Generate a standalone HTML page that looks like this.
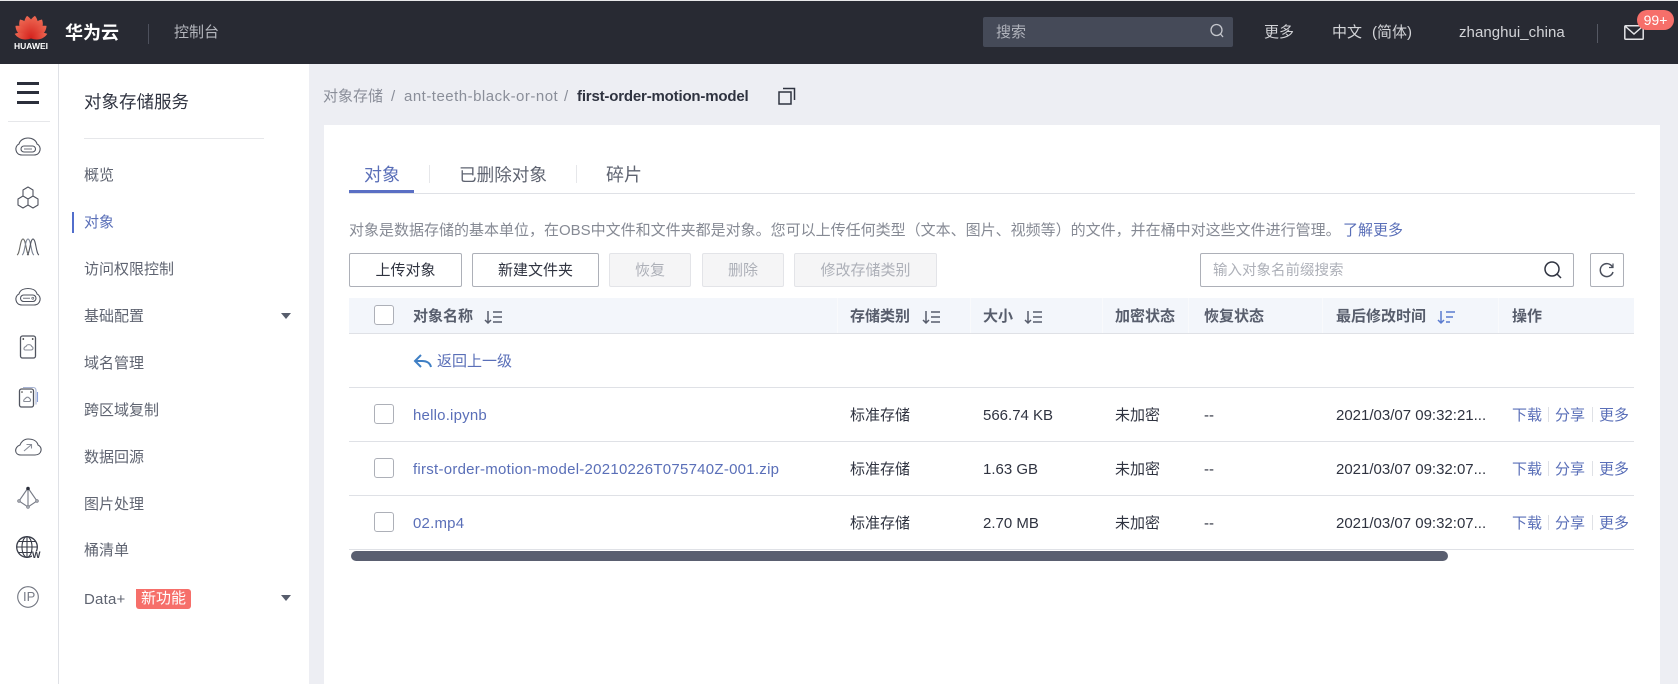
<!DOCTYPE html>
<html lang="zh"><head><meta charset="utf-8"><title>对象存储服务</title>
<style>
*{box-sizing:border-box}
html,body{margin:0;padding:0;width:1678px;height:684px;overflow:hidden;background:#edeef3;font-family:"Liberation Sans","Noto Sans CJK SC",sans-serif;font-size:15px;color:#2f3340}
.a{position:absolute}
.t{position:absolute;white-space:nowrap;line-height:20px;height:20px}
.m{color:#5f6471}
.l{color:#5a6fb8}
.h{font-weight:700;color:#575d6c}
.btn{position:absolute;top:253px;height:34px;line-height:34px;text-align:center;border:1px solid #adb0b8;border-radius:2px;background:#fff;color:#2f3340;font-size:15px}
.dis{background:#f5f5f6;border-color:#e3e4e8;color:#adb0b8}
.cb{position:absolute;left:374px;width:20px;height:20px;border:1px solid #adb0b8;border-radius:3px;background:#fff}
.ln{position:absolute;left:349px;width:1285px;height:1px;background:#dfe1e6}
.d{position:absolute;width:1px;height:15px;background:#dfe1e6}
svg{position:absolute;overflow:visible}
</style></head><body>

<!-- header -->
<div class="a" style="left:0;top:0;width:1678px;height:1px;background:#e8e8ea"></div>
<div class="a" style="left:0;top:1px;width:1678px;height:63px;background:#282a33"></div>
<svg style="left:0;top:0" width="62" height="50" viewBox="0 0 62 50">
<defs><linearGradient id="r" x1="0" y1="0" x2="0" y2="1"><stop offset="0" stop-color="#ee6a54"/><stop offset="1" stop-color="#d4211c"/></linearGradient></defs>
<g fill="url(#r)">
<path d="M0 0C-6.500-8-6-18 0-23C6-18 6.500-8 0 0Z" transform="translate(31 38.500) rotate(-10)"/>
<path d="M0 0C-6.500-8-6-18 0-23C6-18 6.500-8 0 0Z" transform="translate(31 38.500) rotate(10)"/>
<path d="M0 0C-6.500-8-6-17 0-22C6-17 6.500-8 0 0Z" transform="translate(31 38.500) rotate(-30)"/>
<path d="M0 0C-6.500-8-6-17 0-22C6-17 6.500-8 0 0Z" transform="translate(31 38.500) rotate(30)"/>
<path d="M0 0C-5.500-7-5.500-15 0-20C5.500-15 5.500-7 0 0Z" transform="translate(31 38.500) rotate(-51)"/>
<path d="M0 0C-5.500-7-5.500-15 0-20C5.500-15 5.500-7 0 0Z" transform="translate(31 38.500) rotate(51)"/>
<path d="M0 0C-4-6-4-12 0-17C4-12 4-6 0 0Z" transform="translate(31 38.500) rotate(-74)"/>
<path d="M0 0C-4-6-4-12 0-17C4-12 4-6 0 0Z" transform="translate(31 38.500) rotate(74)"/>
</g></svg>
<div class="t" style="left:13px;top:36px;width:36px;text-align:center;font-size:8.500px;font-weight:700;color:#fff">HUAWEI</div>
<div class="t" style="left:65px;top:22px;font-size:18px;font-weight:700;color:#fff;margin-top:1px">华为云</div>
<div class="a" style="left:148px;top:24px;width:1px;height:20px;background:#4d505c"></div>
<div class="t" style="left:174px;top:23px;color:#b4b6bd">控制台</div>
<div class="a" style="left:983px;top:17px;width:250px;height:30px;background:#454a58;border-radius:2px"></div>
<div class="t" style="left:996px;top:23px;color:#b0b3bb">搜索</div>
<svg style="left:1209px;top:23px" width="16" height="16" viewBox="0 0 16 16" fill="none" stroke="#c4c6cc" stroke-width="1.300"><circle cx="7.500" cy="7" r="5.500"/><path d="M11.500 11l2.500 3"/></svg>
<div class="t" style="left:1264px;top:23px;color:#d3d4d8">更多</div>
<div class="t" style="left:1332px;top:23px;color:#d3d4d8">中文</div>
<div class="t" style="left:1372px;top:23px;color:#d3d4d8">(简体)</div>
<div class="t" style="left:1459px;top:23px;color:#d3d4d8;letter-spacing:.05px">zhanghui_china</div>
<div class="a" style="left:1597px;top:24px;width:1px;height:19px;background:#555863"></div>
<svg style="left:1624px;top:25px" width="20" height="15" viewBox="0 0 20 15" fill="none" stroke="#e3e4e7" stroke-width="1.500"><rect x=".8" y=".8" width="18.400" height="13.400" rx="1"/><path d="M1.500 1.500L10 9l8.500-7.500"/></svg>
<div class="t" style="left:1637px;top:10px;width:37px;height:20px;background:#f66f6a;border-radius:10px;color:#fff;text-align:center;font-size:14px">99+</div>

<!-- rail + sidebar -->
<div class="a" style="left:0;top:64px;width:309px;height:620px;background:#fff"></div>
<div class="a" style="left:58px;top:64px;width:1px;height:620px;background:#dfe1e6"></div>
<div class="a" style="left:17px;top:82px;width:22px;height:2.500px;background:#2b2f3b"></div>
<div class="a" style="left:17px;top:91px;width:22px;height:2.500px;background:#2b2f3b"></div>
<div class="a" style="left:17px;top:101px;width:22px;height:2.500px;background:#2b2f3b"></div>
<div class="a" style="left:8px;top:121px;width:42px;height:1px;background:#e6e7ea"></div>

<svg style="left:0;top:0" width="58" height="684" viewBox="0 0 58 684" fill="none" stroke="#50545f" stroke-width="1.100">
<!-- cloud / pill -->
<path d="M22 155h12c7 0 8-9 3-11-1-4-5-6-9-6s-8 2-9 6c-5 2-4 11 3 11z"/>
<rect x="21" y="146" width="14.500" height="6" rx="3"/>
<path d="M24 149h8" stroke-width=".8"/>
<!-- hexes -->
<path d="M28 187l5 3v6l-5 3-5-3v-6zM23 196l5 3v6l-5 3-5-3v-6zM33 196l5 3v6l-5 3-5-3v-6z" stroke-linejoin="round"/>
<!-- waves -->
<path d="M17 255c3-1 3-16 6-16s3 15 6 16" stroke="#6a6a66"/>
<path d="M22 255c3-1 3-16 6-16s3 15 6 16" stroke="#7f8796"/>
<path d="M27 255c3-1 3-16 6-16s3 15 6 16" stroke="#50545f"/>
<!-- cloud 2 -->
<path d="M22 305h12c7 0 8-9 3-11-1-4-5-5.500-9-5.500s-8 1.500-9 5.500c-5 2-4 11 3 11z"/>
<rect x="20.500" y="295" width="15.500" height="6.500" rx="3.200"/>
<path d="M23 298.200h7" stroke-width=".8"/><circle cx="32.800" cy="298.200" r="1" stroke-width=".7"/>
<!-- card -->
<rect x="20.500" y="336" width="15" height="22" rx="2" stroke-width="1.300"/>
<circle cx="23.300" cy="339" r=".9" fill="#333" stroke="none"/><circle cx="32.700" cy="339" r=".9" fill="#333" stroke="none"/>
<path d="M25 350h6c2.500 0 2.500-3 .7-3.500-.7-2.500-5-2.500-5.700 0-2.500.5-2.500 3.500-1 3.500z" stroke="#8a8e99"/>
<!-- card 2 -->
<rect x="19.500" y="389" width="14" height="18" rx="2" stroke-width="1.300"/>
<circle cx="22" cy="392" r=".8" fill="#333" stroke="none"/><circle cx="31" cy="392" r=".8" fill="#333" stroke="none"/>
<path d="M23 387.500h10c2 0 3 1 3 3v14" stroke="#a8b4d4"/><path d="M37.500 392v10" stroke="#8aa0d8"/>
<path d="M24 401.500h5c2 0 2-2.500.5-3-.7-1.800-3.300-1.800-4 0-2 .5-2 3-1.500 3z" stroke="#8a8e99"/>
<!-- cloud arrow -->
<path d="M21 455h14c7 0 8-8 3-10-1-4-5-6-10-6-4 0-7 3-8 6-6 2-6 10 1 10z"/>
<path d="M24 451l7-6M26.500 444.500h5v4" stroke="#8a8e99"/>
<!-- tetra -->
<path d="M28 488l-9 13 9 6 9-6zM28 488v19" stroke="#777b86"/>
<circle cx="28" cy="488.500" r="1.800" fill="#2b2f3b" stroke="none"/>
<circle cx="19" cy="501" r="1.200" fill="#fff" stroke="#777b86"/><circle cx="37" cy="501" r="1.200" fill="#fff" stroke="#777b86"/><circle cx="28" cy="507" r="1.200" fill="#fff" stroke="#777b86"/>
<!-- globe -->
<circle cx="27" cy="547" r="10.300" stroke-width="1.300" stroke="#383c48"/>
<ellipse cx="27" cy="547" rx="5" ry="10.300" stroke="#383c48"/>
<path d="M16.700 547h20.600M18.300 541.500h17.400M18.300 552.500h17.400M27 536.700v20.600" stroke="#383c48"/>
<rect x="32" y="551" width="10" height="8" fill="#fff" stroke="none"/>
<!-- ip -->
<circle cx="28" cy="597" r="10.300" stroke="#70747f"/>
</svg>
<div class="t" style="left:32px;top:549px;font-size:9px;font-weight:700;line-height:12px;height:12px;color:#383c48">W</div>
<div class="t" style="left:23px;top:587px;font-size:13px;color:#777b86">IP</div>

<div class="t" style="left:84px;top:92px;font-size:17.500px;color:#2f3340">对象存储服务</div>
<div class="a" style="left:84px;top:138px;width:180px;height:1px;background:#e6e7ea"></div>
<div class="t m" style="left:84px;top:166px">概览</div>
<div class="a" style="left:72px;top:212px;width:2px;height:21px;background:#526ecc"></div>
<div class="t l" style="left:84px;top:213px">对象</div>
<div class="t m" style="left:84px;top:260px">访问权限控制</div>
<div class="t m" style="left:84px;top:307px">基础配置</div>
<div class="a" style="left:281px;top:313px;border:5.500px solid transparent;border-top:6px solid #575d6c;border-bottom:0"></div>
<div class="t m" style="left:84px;top:354px">域名管理</div>
<div class="t m" style="left:84px;top:401px">跨区域复制</div>
<div class="t m" style="left:84px;top:448px">数据回源</div>
<div class="t m" style="left:84px;top:495px">图片处理</div>
<div class="t m" style="left:84px;top:541px">桶清单</div>
<div class="t m" style="left:84px;top:589px;letter-spacing:.2px;margin-top:1px">Data+</div>
<div class="t" style="left:136px;top:589px;width:55px;background:#f66f6a;color:#fff;text-align:center;border-radius:0 3px 3px 3px">新功能</div>
<div class="a" style="left:281px;top:595px;border:5.500px solid transparent;border-top:6px solid #575d6c;border-bottom:0"></div>

<!-- breadcrumb -->
<div class="t" style="left:323px;top:87px;color:#8a8e99">对象存储</div>
<div class="t" style="left:391px;top:87px;color:#8a8e99">/</div>
<div class="t" style="left:404px;top:87px;color:#8a8e99;letter-spacing:.49px">ant-teeth-black-or-not</div>
<div class="t" style="left:564px;top:87px;color:#8a8e99">/</div>
<div class="t" style="left:577px;top:87px;font-weight:700;color:#2f3340;letter-spacing:-.18px">first-order-motion-model</div>
<svg style="left:778px;top:87px" width="18" height="18" viewBox="0 0 18 18" fill="none" stroke="#2f3340" stroke-width="1.500"><rect x="1" y="5" width="12" height="12"/><path d="M5 1.500h11.500V13"/></svg>

<!-- card -->
<div class="a" style="left:324px;top:125px;width:1336px;height:559px;background:#fff"></div>

<div class="t" style="left:364px;top:165px;font-size:18px;color:#5a6fb8">对象</div>
<div class="a" style="left:429px;top:165px;width:1px;height:18px;background:#e6e7ea"></div>
<div class="t" style="left:459px;top:165px;font-size:17.600px;color:#5f6471">已删除对象</div>
<div class="a" style="left:576px;top:165px;width:1px;height:18px;background:#e6e7ea"></div>
<div class="t" style="left:606px;top:165px;font-size:18px;color:#5f6471">碎片</div>
<div class="a" style="left:349px;top:193px;width:1286px;height:1px;background:#dfe1e6"></div>
<div class="a" style="left:349px;top:190px;width:65px;height:3px;background:#5a6fc4"></div>

<div class="t" style="left:349px;top:221px;color:#868a94">对象是数据存储的基本单位，在OBS中文件和文件夹都是对象。您可以上传任何类型（文本、图片、视频等）的文件，并在桶中对这些文件进行管理。</div>
<div class="t l" style="left:1343px;top:221px">了解更多</div>

<div class="btn" style="left:349px;width:113px">上传对象</div>
<div class="btn" style="left:472px;width:127px">新建文件夹</div>
<div class="btn dis" style="left:609px;width:82px">恢复</div>
<div class="btn dis" style="left:702px;width:82px">删除</div>
<div class="btn dis" style="left:794px;width:143px">修改存储类别</div>
<div class="a" style="left:1200px;top:253px;width:374px;height:34px;border:1px solid #adb0b8;border-radius:2px;background:#fff"></div>
<div class="t" style="left:1213px;top:261px;color:#adb0b8;font-size:14.500px">输入对象名前缀搜索</div>
<svg style="left:1543px;top:260px" width="20" height="20" viewBox="0 0 20 20" fill="none" stroke="#2f3340" stroke-width="1.500"><circle cx="9" cy="9" r="7"/><path d="M14 14l4 4"/></svg>
<div class="a" style="left:1590px;top:253px;width:34px;height:34px;border:1px solid #adb0b8;border-radius:2px;background:#fff"></div>
<svg style="left:1599px;top:262px" width="16" height="16" viewBox="0 0 16 16" fill="none" stroke="#4a4f5c" stroke-width="1.500"><path d="M13.500 5A6.500 6.500 0 1 0 14 10"/><path d="M14 1.500V5.500H10" stroke-width="1.200"/></svg>

<!-- table head -->
<div class="a" style="left:349px;top:298px;width:1285px;height:36px;background:#f3f6fb;border-bottom:1px solid #dfe1e6"></div>
<div class="a" style="left:837px;top:298px;width:1px;height:35px;background:#f9fafc"></div>
<div class="a" style="left:970px;top:298px;width:1px;height:35px;background:#f9fafc"></div>
<div class="a" style="left:1102px;top:298px;width:1px;height:35px;background:#f9fafc"></div>
<div class="a" style="left:1188px;top:298px;width:1px;height:35px;background:#f9fafc"></div>
<div class="a" style="left:1322px;top:298px;width:1px;height:35px;background:#f9fafc"></div>
<div class="a" style="left:1498px;top:298px;width:1px;height:35px;background:#f9fafc"></div>
<div class="cb" style="top:305px"></div>
<div class="t h" style="left:413px;top:307px">对象名称</div>
<div class="t h" style="left:850px;top:307px">存储类别</div>
<div class="t h" style="left:983px;top:307px">大小</div>
<div class="t h" style="left:1115px;top:307px">加密状态</div>
<div class="t h" style="left:1204px;top:307px">恢复状态</div>
<div class="t h" style="left:1336px;top:307px">最后修改时间</div>
<div class="t h" style="left:1512px;top:307px">操作</div>
<svg style="left:0;top:0" width="1678" height="684" fill="none" stroke="#575d6c" stroke-width="1.500">
<path d="M488 311v12M485 320l3 3 3-3M493 312h9M493 317h9M493 322h9"/>
<path d="M926 311v12M923 320l3 3 3-3M931 312h9M931 317h9M931 322h9"/>
<path d="M1028 311v12M1025 320l3 3 3-3M1033 312h9M1033 317h9M1033 322h9"/>
<path stroke="#5a7bd0" d="M1441 311v12M1438 320l3 3 3-3M1446 312h9M1446 317h7M1446 322h4"/>
<path stroke="#3f7fc4" stroke-width="2" d="M421 355l-6 6 6 6M415 361h7c5 0 8 2 9 6"/>
</svg>

<div class="t l" style="left:437px;top:352px">返回上一级</div>
<div class="ln" style="top:387px"></div>

<!-- rows -->
<div class="cb" style="top:404px"></div>
<div class="t l" style="left:413px;top:404px;margin-top:2px;letter-spacing:.2px">hello.ipynb</div>
<div class="t" style="left:850px;top:406px">标准存储</div>
<div class="t" style="left:983px;top:406px">566.74 KB</div>
<div class="t" style="left:1115px;top:406px">未加密</div>
<div class="t" style="left:1204px;top:406px">--</div>
<div class="t" style="left:1336px;top:406px">2021/03/07 09:32:21...</div>
<div class="t l" style="left:1512px;top:406px">下载</div><div class="d" style="left:1548px;top:407px"></div>
<div class="t l" style="left:1555px;top:406px">分享</div><div class="d" style="left:1592px;top:407px"></div>
<div class="t l" style="left:1599px;top:406px">更多</div>
<div class="ln" style="top:441px"></div>

<div class="cb" style="top:458px"></div>
<div class="t l" style="left:413px;top:460px;letter-spacing:.26px">first-order-motion-model-20210226T075740Z-001.zip</div>
<div class="t" style="left:850px;top:460px">标准存储</div>
<div class="t" style="left:983px;top:460px">1.63 GB</div>
<div class="t" style="left:1115px;top:460px">未加密</div>
<div class="t" style="left:1204px;top:460px">--</div>
<div class="t" style="left:1336px;top:460px">2021/03/07 09:32:07...</div>
<div class="t l" style="left:1512px;top:460px">下载</div><div class="d" style="left:1548px;top:461px"></div>
<div class="t l" style="left:1555px;top:460px">分享</div><div class="d" style="left:1592px;top:461px"></div>
<div class="t l" style="left:1599px;top:460px">更多</div>
<div class="ln" style="top:495px"></div>

<div class="cb" style="top:512px"></div>
<div class="t l" style="left:413px;top:514px;letter-spacing:.2px">02.mp4</div>
<div class="t" style="left:850px;top:514px">标准存储</div>
<div class="t" style="left:983px;top:514px">2.70 MB</div>
<div class="t" style="left:1115px;top:514px">未加密</div>
<div class="t" style="left:1204px;top:514px">--</div>
<div class="t" style="left:1336px;top:514px">2021/03/07 09:32:07...</div>
<div class="t l" style="left:1512px;top:514px">下载</div><div class="d" style="left:1548px;top:515px"></div>
<div class="t l" style="left:1555px;top:514px">分享</div><div class="d" style="left:1592px;top:515px"></div>
<div class="t l" style="left:1599px;top:514px">更多</div>
<div class="ln" style="top:549px"></div>
<div class="a" style="left:351px;top:551px;width:1097px;height:10px;background:#5a5f70;border-radius:5px"></div>
</body></html>
